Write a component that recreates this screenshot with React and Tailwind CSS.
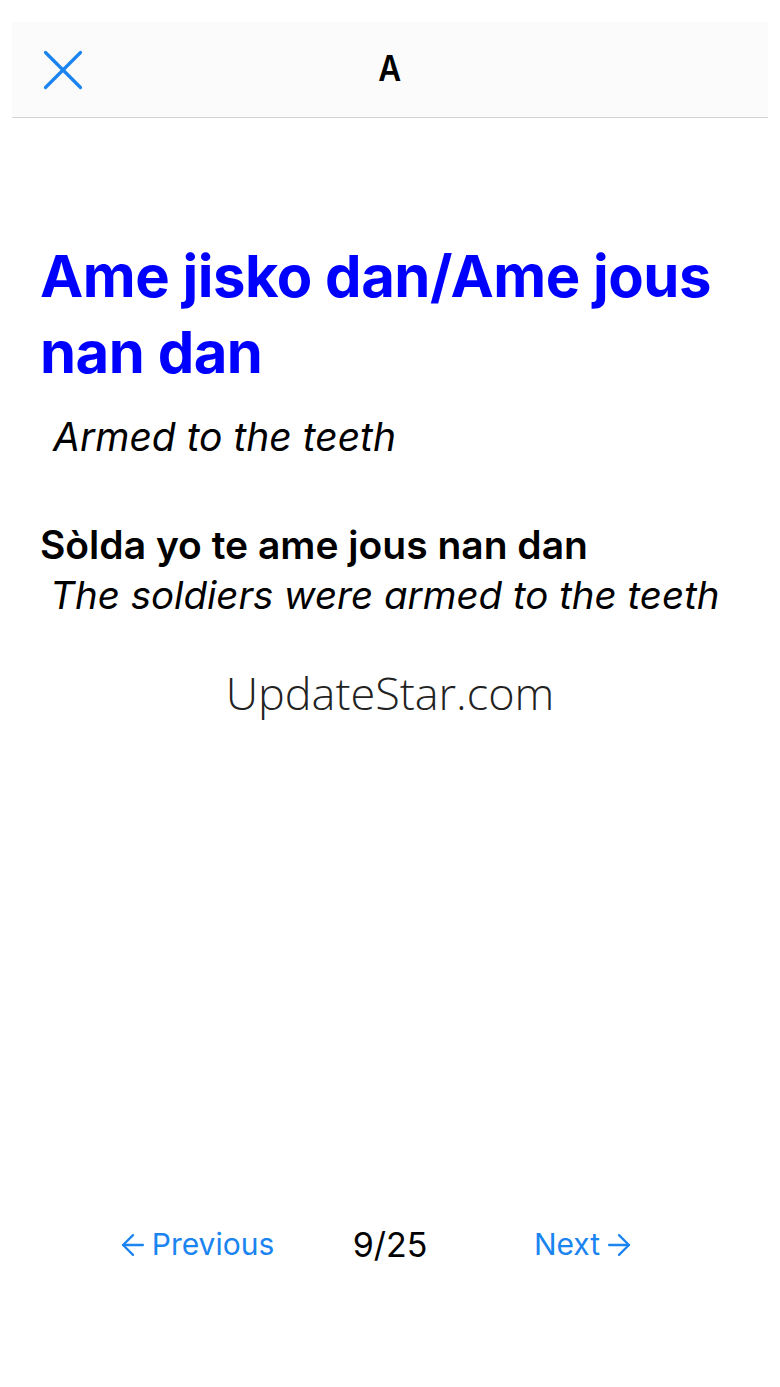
import React from "react";
import { X, ArrowLeft, ArrowRight } from "lucide-react";

export default function App() {
  return (
    <div className="w-[780px] h-[1387px] bg-white flex flex-col font-['Inter',sans-serif] text-black">
      {/* header */}
      <header className="mx-3 mt-[22px] h-[96px] bg-[#fbfbfb] border-b border-[#d4d4d4] relative flex items-center justify-center">
        <button className="absolute left-[16px] top-[13px] text-[#1a84f0]">
          <X size={70} strokeWidth={1.1} />
        </button>
        <h1 className="text-[35px] font-semibold pb-[2px] scale-x-90">A</h1>
      </header>

      {/* entry */}
      <main className="flex-1 px-10 pt-[120px]">
        <h2 className="text-[58px] leading-[76px] font-bold text-[#0000ff] tracking-[-0.5px]">
          Ame jisko dan/Ame jous nan dan
        </h2>
        <p className="mt-[23px] text-[39px] italic leading-[48px] pl-[13px]">Armed to the teeth</p>

        <div className="mt-[58px]">
          <p className="text-[39px] font-semibold leading-[52px]">Sòlda yo te ame jous nan dan</p>
          <p className="text-[38.5px] italic leading-[48px] pl-[10px]">The soldiers were armed to the teeth</p>
        </div>

        <p className="mt-[40px] text-center text-[45px] font-['Open_Sans',sans-serif] font-light text-[#222]">
          UpdateStar.com
        </p>
      </main>

      {/* pager */}
      <footer className="h-[168px] flex items-start justify-center">
        <div className="w-[585px] grid grid-cols-3 items-center text-[30px]">
          <button className="flex items-center justify-center gap-[2px] text-[#1a84f0]">
            <ArrowLeft size={34} strokeWidth={1.6} />
            Previous
          </button>
          <span className="text-center text-[34px]">9/25</span>
          <button className="flex items-center justify-center gap-[2px] text-[#1a84f0]">
            Next
            <ArrowRight size={34} strokeWidth={1.6} />
          </button>
        </div>
      </footer>
    </div>
  );
}
